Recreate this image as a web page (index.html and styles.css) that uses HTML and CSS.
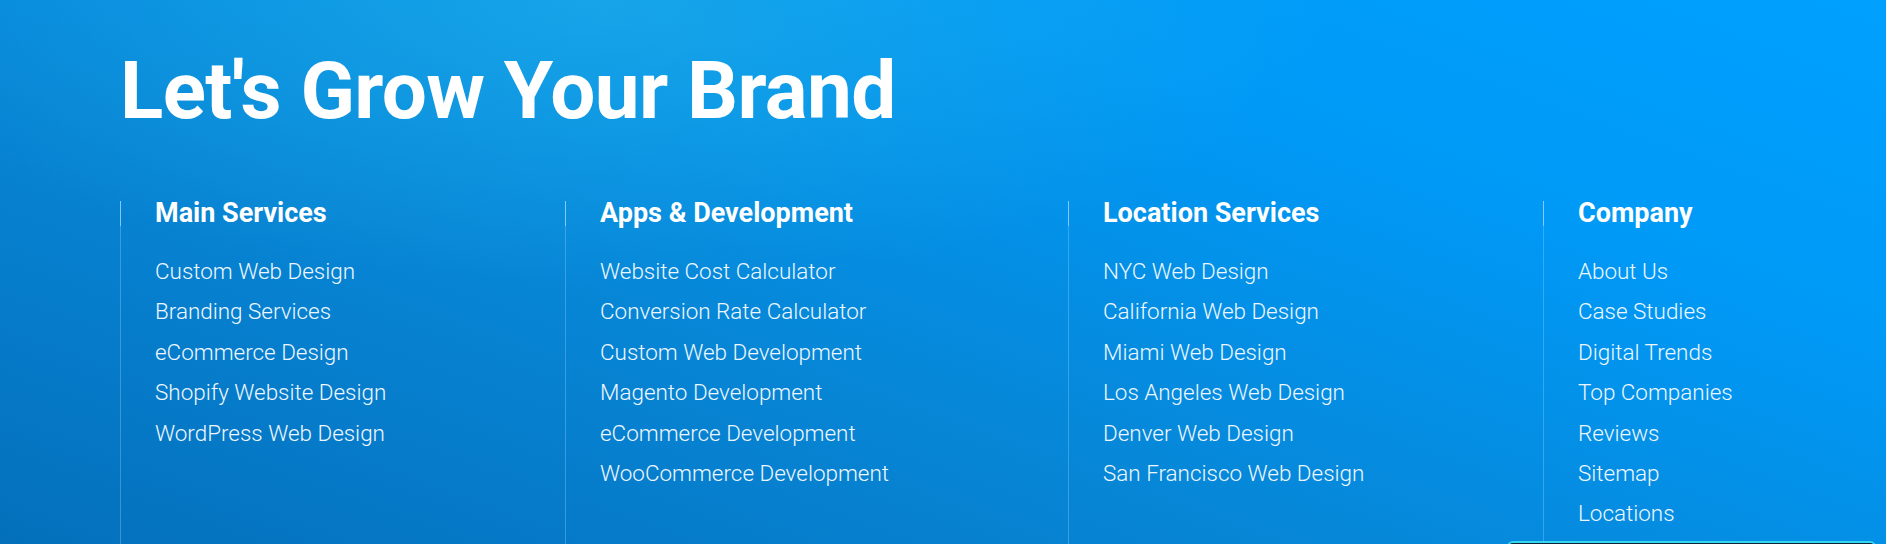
FILE: index.html
```html
<!DOCTYPE html>
<html lang="en">
<head>
<meta charset="utf-8">
<title>Let's Grow Your Brand</title>
<link rel="stylesheet" href="styles.css">
</head>
<body>
<section class="footer">
  <h1 class="title">Let's Grow Your Brand</h1>
  <div class="cols">
    <div class="col">
      <h3 class="col-title">Main Services</h3>
      <ul class="links">
        <li>Custom Web Design</li>
        <li>Branding Services</li>
        <li>eCommerce Design</li>
        <li>Shopify Website Design</li>
        <li>WordPress Web Design</li>
      </ul>
    </div>
    <div class="col">
      <h3 class="col-title">Apps &amp; Development</h3>
      <ul class="links">
        <li>Website Cost Calculator</li>
        <li>Conversion Rate Calculator</li>
        <li>Custom Web Development</li>
        <li>Magento Development</li>
        <li>eCommerce Development</li>
        <li>WooCommerce Development</li>
      </ul>
    </div>
    <div class="col">
      <h3 class="col-title">Location Services</h3>
      <ul class="links">
        <li>NYC Web Design</li>
        <li>California Web Design</li>
        <li>Miami Web Design</li>
        <li>Los Angeles Web Design</li>
        <li>Denver Web Design</li>
        <li>San Francisco Web Design</li>
      </ul>
    </div>
    <div class="col">
      <h3 class="col-title">Company</h3>
      <ul class="links">
        <li>About Us</li>
        <li>Case Studies</li>
        <li>Digital Trends</li>
        <li>Top Companies</li>
        <li>Reviews</li>
        <li>Sitemap</li>
        <li>Locations</li>
      </ul>
    </div>
  </div>
  <div class="widget"></div>
</section>
</body>
</html>
```

FILE: styles.css
```css
html, body {
  margin: 0;
  padding: 0;
}
body {
  width: 1886px;
  height: 544px;
  overflow: hidden;
  font-family: Roboto, "Liberation Sans", sans-serif;
}
.footer {
  position: relative;
  box-sizing: border-box;
  height: 544px;
  padding: 43px 0 0 120px;
  color: #fff;
  background:
    radial-gradient(ellipse 55% 75% at 32% 0%, rgba(40, 178, 228, 0.55), rgba(40, 178, 228, 0) 70%),
    linear-gradient(20deg, #0470bc 0%, #0786d6 38%, #0099f6 72%, #00a0ff 100%);
  display: flex;
  flex-direction: column;
}
.title {
  margin: 0;
  font-size: 80px;
  line-height: 96px;
  font-weight: 700;
  letter-spacing: -0.6px;
}
.cols {
  margin-top: 62px;
  flex: 1;
  display: grid;
  grid-template-columns: 445px 503px 475px 1fr;
}
.col {
  position: relative;
  border-left: 1px solid rgba(150, 210, 255, 0.35);
  padding-left: 34px;
}
.col::before {
  content: "";
  position: absolute;
  left: -1px;
  top: 0;
  width: 1px;
  height: 25px;
  background: rgba(140, 205, 255, 0.9);
}
.col-title {
  margin: 0;
  font-size: 27px;
  line-height: 24px;
  font-weight: 700;
}
.links {
  list-style: none;
  margin: 26px 0 0;
  padding: 0;
}
.links li {
  font-size: 22.45px;
  line-height: 40.4px;
  font-weight: 300;
  color: #eef7ff;
  white-space: nowrap;
}
.widget {
  position: absolute;
  left: 1507px;
  top: 541px;
  width: 365px;
  height: 20px;
  border: 2px solid #33d5f2;
  border-radius: 6px;
  background: #0b2636;
}
```
